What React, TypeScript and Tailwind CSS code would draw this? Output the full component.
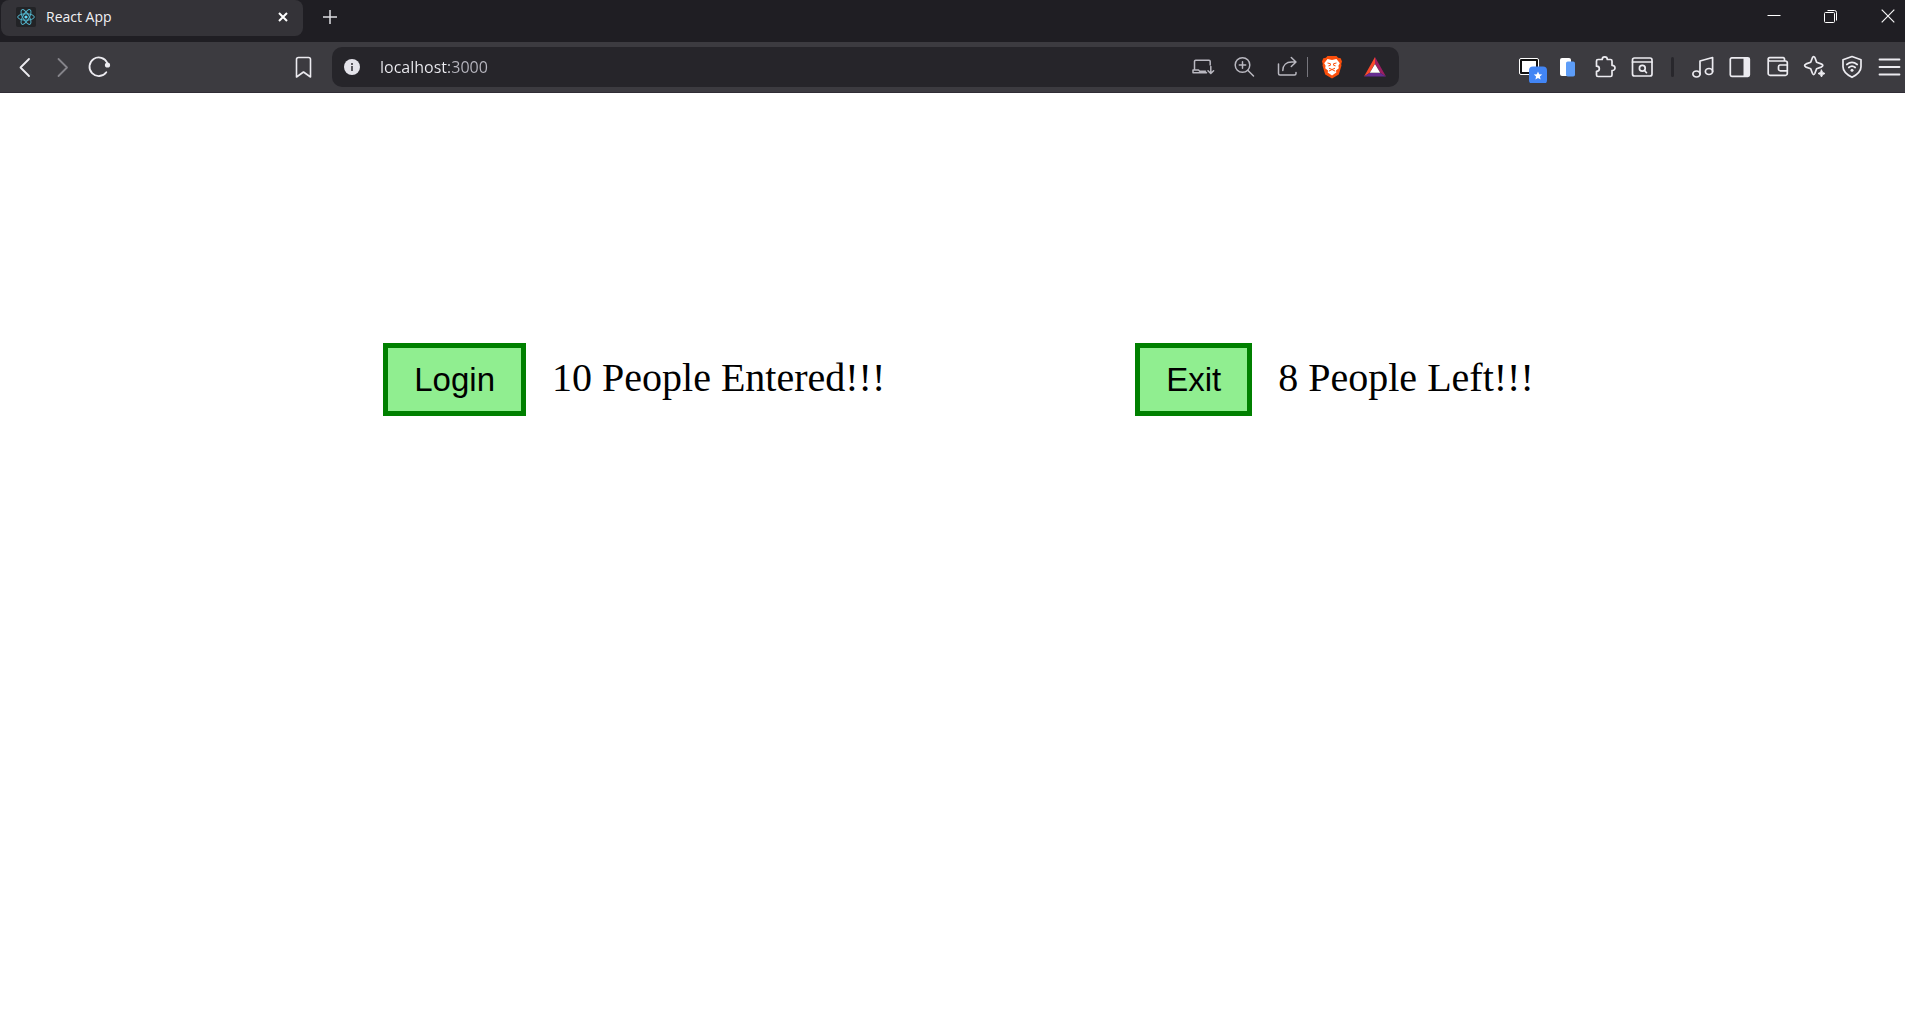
import { useState } from "react";
import type { ReactNode } from "react";

const stroke = {
  fill: "none",
  stroke: "currentColor",
  strokeWidth: 1.5,
  strokeLinecap: "round" as const,
  strokeLinejoin: "round" as const,
};

function Icon({ children }: { children: ReactNode }) {
  return (
    <svg viewBox="0 0 24 24" className="size-6 shrink-0" aria-hidden="true" {...stroke}>
      {children}
    </svg>
  );
}

function ToolButton({ label, children, className = "" }: { label: string; children: ReactNode; className?: string }) {
  return (
    <button type="button" aria-label={label} className={`flex h-8 w-8 shrink-0 items-center justify-center ${className}`}>
      {children}
    </button>
  );
}

function BarButton({ label, children, className = "" }: { label: string; children: ReactNode; className?: string }) {
  return (
    <button type="button" aria-label={label} className={`flex size-6 shrink-0 items-center justify-center ${className}`}>
      {children}
    </button>
  );
}

function ReactLogo() {
  return (
    <svg viewBox="0 0 20 20" className="size-5 shrink-0" aria-hidden="true">
      <rect width="20" height="20" rx="2" fill="#222326" />
      <g fill="none" stroke="#52b5cd" strokeWidth="1">
        <ellipse cx="10" cy="10" rx="8.3" ry="3.2" />
        <ellipse cx="10" cy="10" rx="8.3" ry="3.2" transform="rotate(60 10 10)" />
        <ellipse cx="10" cy="10" rx="8.3" ry="3.2" transform="rotate(120 10 10)" />
      </g>
      <circle cx="10" cy="10" r="1.6" fill="#61dafb" />
    </svg>
  );
}

function TabStrip() {
  return (
    <div className="flex h-[42px] items-start bg-[#1f1e23] px-px text-[#f0f0f3]">
      <div className="flex h-9 w-[302px] items-center rounded-lg bg-[#343338] pr-3 pb-0.5 pl-[15px]">
        <ReactLogo />
        <span className="ml-2.5 flex-1 text-[14px] leading-5">React App</span>
        <button type="button" aria-label="Close tab" className="flex size-4 items-center justify-center">
          <svg viewBox="0 0 10 10" className="size-2.5" aria-hidden="true">
            <path d="M1 1l8 8M9 1l-8 8" stroke="#fff" strokeWidth="2" />
          </svg>
        </button>
      </div>
      <button type="button" aria-label="New tab" className="ml-4 flex h-[34px] w-[22px] items-center justify-center">
        <svg viewBox="0 0 14 14" className="size-3.5" aria-hidden="true">
          <path d="M7 0v14M0 7h14" stroke="#dedee2" strokeWidth="1.5" />
        </svg>
      </button>
      <div className="ml-auto flex gap-[25px]">
        <ToolButton label="Minimize">
          <svg viewBox="0 0 14 14" className="size-3.5" aria-hidden="true">
            <path d="M0.5 6.5h13" stroke="#fff" />
          </svg>
        </ToolButton>
        <ToolButton label="Restore">
          <svg viewBox="0 0 14 14" className="size-3.5" fill="none" stroke="#fff" aria-hidden="true">
            <rect x="0.5" y="3.5" width="10" height="10" rx="1" />
            <path d="M3.500 1.500h7a2 2 0 0 1 2 2v8" />
          </svg>
        </ToolButton>
        <ToolButton label="Close">
          <svg viewBox="0 0 14 14" className="size-3.5" aria-hidden="true">
            <path d="M.7.7l12.600 12.600M13.300.7L.7 13.300" stroke="#f5f5f5" strokeWidth="1.200" />
          </svg>
        </ToolButton>
      </div>
    </div>
  );
}

function AddressBar() {
  const [url, setUrl] = useState("localhost:3000");
  return (
    <div className="flex h-10 min-w-0 flex-1 items-center rounded-[10px] bg-[#26252a] px-3 text-[#b9b8c0]">
      <button type="button" aria-label="Site information" className="shrink-0">
        <svg viewBox="0 0 16 16" className="size-4" aria-hidden="true">
          <circle cx="8" cy="8" r="8" fill="#e4e3ea" />
          <rect x="7" y="4" width="2" height="2" fill="#5a595f" />
          <rect x="7" y="7" width="2" height="5" fill="#5a595f" />
        </svg>
      </button>
      <input
        aria-label="Address"
        value={url}
        onChange={(e) => setUrl(e.target.value)}
        className="ml-5 h-6 min-w-0 flex-1 bg-[linear-gradient(to_right,#ededf2_69px,#b8b7c0_69px)] bg-clip-text text-[16px] text-transparent caret-white outline-none"
      />
      <BarButton label="Install app">
        <Icon>
          <path d="M14.500 17.800H1M2.500 15V6.500a1.200 1.200 0 0 1 1.200-1.200h13.300a1.200 1.200 0 0 1 1.200 1.200V10M1 15h5.500l1.200 1.200h5.800M1 15v2.800" />
          <path d="M18.800 11.500v6.800M16 15.700l2.800 2.800 2.800-2.800" />
        </Icon>
      </BarButton>
      <BarButton label="Zoom" className="ml-[17px]">
        <Icon>
          <circle cx="9.500" cy="10" r="7.300" />
          <path d="M15 15.500l5.500 5.500M9.500 6.800v6.400M6.300 10h6.400" />
        </Icon>
      </BarButton>
      <BarButton label="Share" className="ml-[19px]">
        <Icon>
          <path d="M2.500 9v9.500a1.500 1.500 0 0 0 1.500 1.500h14.500a1.500 1.500 0 0 0 1.500-1.500V17.500" />
          <path d="M15.300 2.500l4.700 4.500-4.700 4.500M20 7h-4.500C10.500 7 6.800 10 6.800 15.500" />
        </Icon>
      </BarButton>
      <div className="ml-[7px] h-5 w-px bg-[#77767d]" />
      <BarButton label="Brave Shields" className="ml-3">
        <svg viewBox="0 0 24 24" className="size-6" aria-hidden="true">
          <path d="M7.500 1h9l1.600 1.700 2.600.5L22 6.500l-.8 2.500.3 1.500-2.700 9L12 23.500l-6.800-4-2.700-9 .3-1.500L2 6.500l1.300-3.300 2.600-.5z" fill="#fb4f0c" />
          <path d="M7.500 4l4.500.9 4.500-.9 3.300 4.200-1.400 2.600.4 2.400-2.800 2.200.3 2.100L12 20.500l-4.300-3 .3-2.100-2.800-2.200.4-2.400-1.400-2.600z" fill="#fff" />
          <path d="M7.500 8l2.900.7v1.600l-2 .6M16.500 8l-2.900.7v1.600l2 .6M9 13.200l3 1.300 3-1.300M8.800 16.200l3.200-1.700 3.200 1.700" fill="none" stroke="#fb4f0c" strokeWidth="1" />
        </svg>
      </BarButton>
      <BarButton label="Brave Rewards" className="ml-[19px]">
        <svg viewBox="0 0 24 24" className="size-6" aria-hidden="true">
          <path d="M12 2v6.500L6.500 18 1 21.500z" fill="#fb4a2c" />
          <path d="M12 2l11 19.500L17.500 18 12 8.500z" fill="#9e1f63" />
          <path d="M1 21.500L6.500 18h11l5.500 3.500z" fill="#662d91" />
          <path d="M12 9l5.200 8.800H6.800z" fill="#fff" />
        </svg>
      </BarButton>
    </div>
  );
}

function Toolbar() {
  return (
    <div className="flex h-[51px] items-center border-b border-[#302d35] bg-[#3c3b40] pl-[9px] text-[#ecebf0]">
      <div className="flex gap-[5px]">
        <ToolButton label="Back">
          <Icon>
            <path d="M16 4L7.500 12.500l8.500 8.500" strokeWidth="1.800" />
          </Icon>
        </ToolButton>
        <ToolButton label="Forward" className="text-[#85848a]">
          <Icon>
            <path d="M8.500 4L17 12.500l-8.500 8.500" strokeWidth="1.800" />
          </Icon>
        </ToolButton>
        <ToolButton label="Reload">
          <Icon>
            <path d="M20.300 8A9.300 9.300 0 1 0 19.300 17.200" strokeWidth="1.800" />
            <circle cx="20.500" cy="10" r="2.600" fill="currentColor" stroke="none" />
          </Icon>
        </ToolButton>
      </div>
      <ToolButton label="Bookmark this page" className="mr-3 ml-[173px]">
        <Icon>
          <path d="M4.500 4.500a2 2 0 0 1 2-2h10a2 2 0 0 1 2 2V22l-7-5-7 5z" strokeWidth="1.600" />
        </Icon>
      </ToolButton>
      <AddressBar />
      <div className="ml-[116px] flex gap-[5px]">
        <ToolButton label="Pinned extension">
          <svg viewBox="0 0 32 32" className="size-8" aria-hidden="true">
            <rect x="4.500" y="7.500" width="19" height="16" rx="1.500" fill="#111" stroke="#fff" />
            <rect x="7" y="10" width="14" height="11" fill="#fff" />
            <rect x="14" y="15.500" width="18" height="17.500" rx="4" fill="#4285f4" />
            <path d="M23 20.500l1.200 2.700 3 .3-2.300 2 .7 2.900-2.600-1.500-2.600 1.500.7-2.900-2.300-2 3-.3z" fill="#fff" />
          </svg>
        </ToolButton>
        <ToolButton label="Device extension">
          <svg viewBox="0 0 24 24" className="size-6" aria-hidden="true">
            <path d="M6 3h7a2 2 0 0 1 2 2v16H6a2 2 0 0 1-2-2V5a2 2 0 0 1 2-2z" fill="#fff" />
            <rect x="10" y="6.500" width="9" height="15" rx="1.800" fill="#5d9df8" />
          </svg>
        </ToolButton>
        <ToolButton label="Extensions">
          <Icon>
            <path d="M5 4.500h4.200C9.200 1 14.300 1 14.300 4.500H17.500a1.500 1.500 0 0 1 1.500 1.500v4.300c4-.2 4 5.400 0 5.200v4.500a1.500 1.500 0 0 1-1.500 1.500h-12.500a1.500 1.500 0 0 1-1.500-1.500v-3.700c3.800 0 3.800-5.100 0-5.100V6A1.500 1.500 0 0 1 5 4.500z" strokeWidth="1.700" />
          </Icon>
        </ToolButton>
        <ToolButton label="Find in page">
          <Icon>
            <rect x="2.500" y="3" width="19.500" height="18" rx="2" strokeWidth="1.700" />
            <path d="M2.500 7h19.500M14.500 15.500l2 2.200" strokeWidth="1.700" />
            <circle cx="12.300" cy="13.200" r="2.900" strokeWidth="1.700" />
          </Icon>
        </ToolButton>
      </div>
      <div className="ml-[13px] h-5 w-[3px] rounded-sm bg-[#28272c]" />
      <div className="ml-3.5 flex gap-[5px]">
        <ToolButton label="Playlist">
          <Icon>
            <ellipse cx="4.500" cy="19" rx="3.600" ry="3" strokeWidth="1.700" />
            <ellipse cx="17" cy="16.500" rx="3.600" ry="3" strokeWidth="1.700" />
            <path d="M8 19V6L20.600 2.500v14" strokeWidth="1.700" />
          </Icon>
        </ToolButton>
        <ToolButton label="Side panel">
          <Icon>
            <rect x="1.300" y="2.800" width="19" height="18.500" rx="1.500" strokeWidth="1.700" />
            <rect x="14.500" y="3" width="6" height="18" fill="currentColor" stroke="none" />
          </Icon>
        </ToolButton>
        <ToolButton label="Wallet">
          <Icon>
            <path d="M18.500 6V4a1.300 1.300 0 0 0-1.300-1.300H3.800a1.600 1.600 0 0 0 0 3.300H19.500A1.800 1.800 0 0 1 21.300 8v10.500a1.800 1.800 0 0 1-1.800 1.800H4a1.800 1.800 0 0 1-1.800-1.800V4.500" strokeWidth="1.700" />
            <path d="M21.300 10h-7a1.800 1.800 0 0 0-1.800 1.800v2.200a1.800 1.800 0 0 0 1.800 1.800h7" strokeWidth="1.700" />
          </Icon>
        </ToolButton>
        <ToolButton label="Leo AI">
          <Icon>
            <path d="M9.500 2.500c1-1.200 2-1 2.600.5l1.500 4.200 4.500 1.700c2.300.9 2.300 2.300 0 3.200l-4.500 1.600-1.700 4.600c-.7 1.700-1.800 1.700-2.500 0l-1.700-4.600-4.600-1.600c-2-.9-2-2.200 0-3.200l4.600-1.700z" strokeWidth="1.700" />
            <path d="M18.500 15l1.100 2.400 2.400 1.100-2.400 1.100-1.100 2.400-1.100-2.400-2.400-1.100 2.400-1.100z" fill="currentColor" strokeWidth="1" />
          </Icon>
        </ToolButton>
        <ToolButton label="VPN">
          <Icon>
            <path d="M12 1.500l9 3.300v7c0 5-4 8-9 10.500-5-2.500-9-5.500-9-10.500v-7z" strokeWidth="1.700" />
            <path d="M6.800 9.500c3.300-2.700 7.100-2.700 10.400 0M8.800 12.500c2-1.700 4.400-1.700 6.400 0" strokeWidth="1.700" />
            <circle cx="12" cy="15.300" r="1.500" fill="currentColor" stroke="none" />
          </Icon>
        </ToolButton>
        <ToolButton label="Menu">
          <Icon>
            <path d="M2.500 4.500h20M2.500 12h20M2.500 19.500h20" strokeWidth="1.800" />
          </Icon>
        </ToolButton>
      </div>
    </div>
  );
}

function Counter({ action, count, noun, onPress }: { action: string; count: number; noun: string; onPress: () => void }) {
  return (
    <div className="flex items-baseline gap-[26px]">
      <button
        type="button"
        onClick={onPress}
        className="border-[5px] border-[#008000] bg-[#90ee90] px-[26px] py-3 font-['Liberation_Sans',Arial,sans-serif] text-[33px] leading-[39px]"
      >
        {action}
      </button>
      <span className="font-['Liberation_Serif','Times_New_Roman',serif] text-[40px] leading-[46px]">
        {count} People {noun}!!!
      </span>
    </div>
  );
}

export default function App() {
  const [entered, setEntered] = useState(10);
  const [left, setLeft] = useState(8);
  return (
    <div className="min-h-screen bg-white text-black">
      <header className="font-['Open_Sans','Noto_Sans',sans-serif]">
        <TabStrip />
        <Toolbar />
      </header>
      <main className="flex justify-center gap-[250px] pt-[250px] pl-3">
        <Counter action="Login" count={entered} noun="Entered" onPress={() => setEntered(entered + 1)} />
        <Counter action="Exit" count={left} noun="Left" onPress={() => setLeft(left + 1)} />
      </main>
    </div>
  );
}
